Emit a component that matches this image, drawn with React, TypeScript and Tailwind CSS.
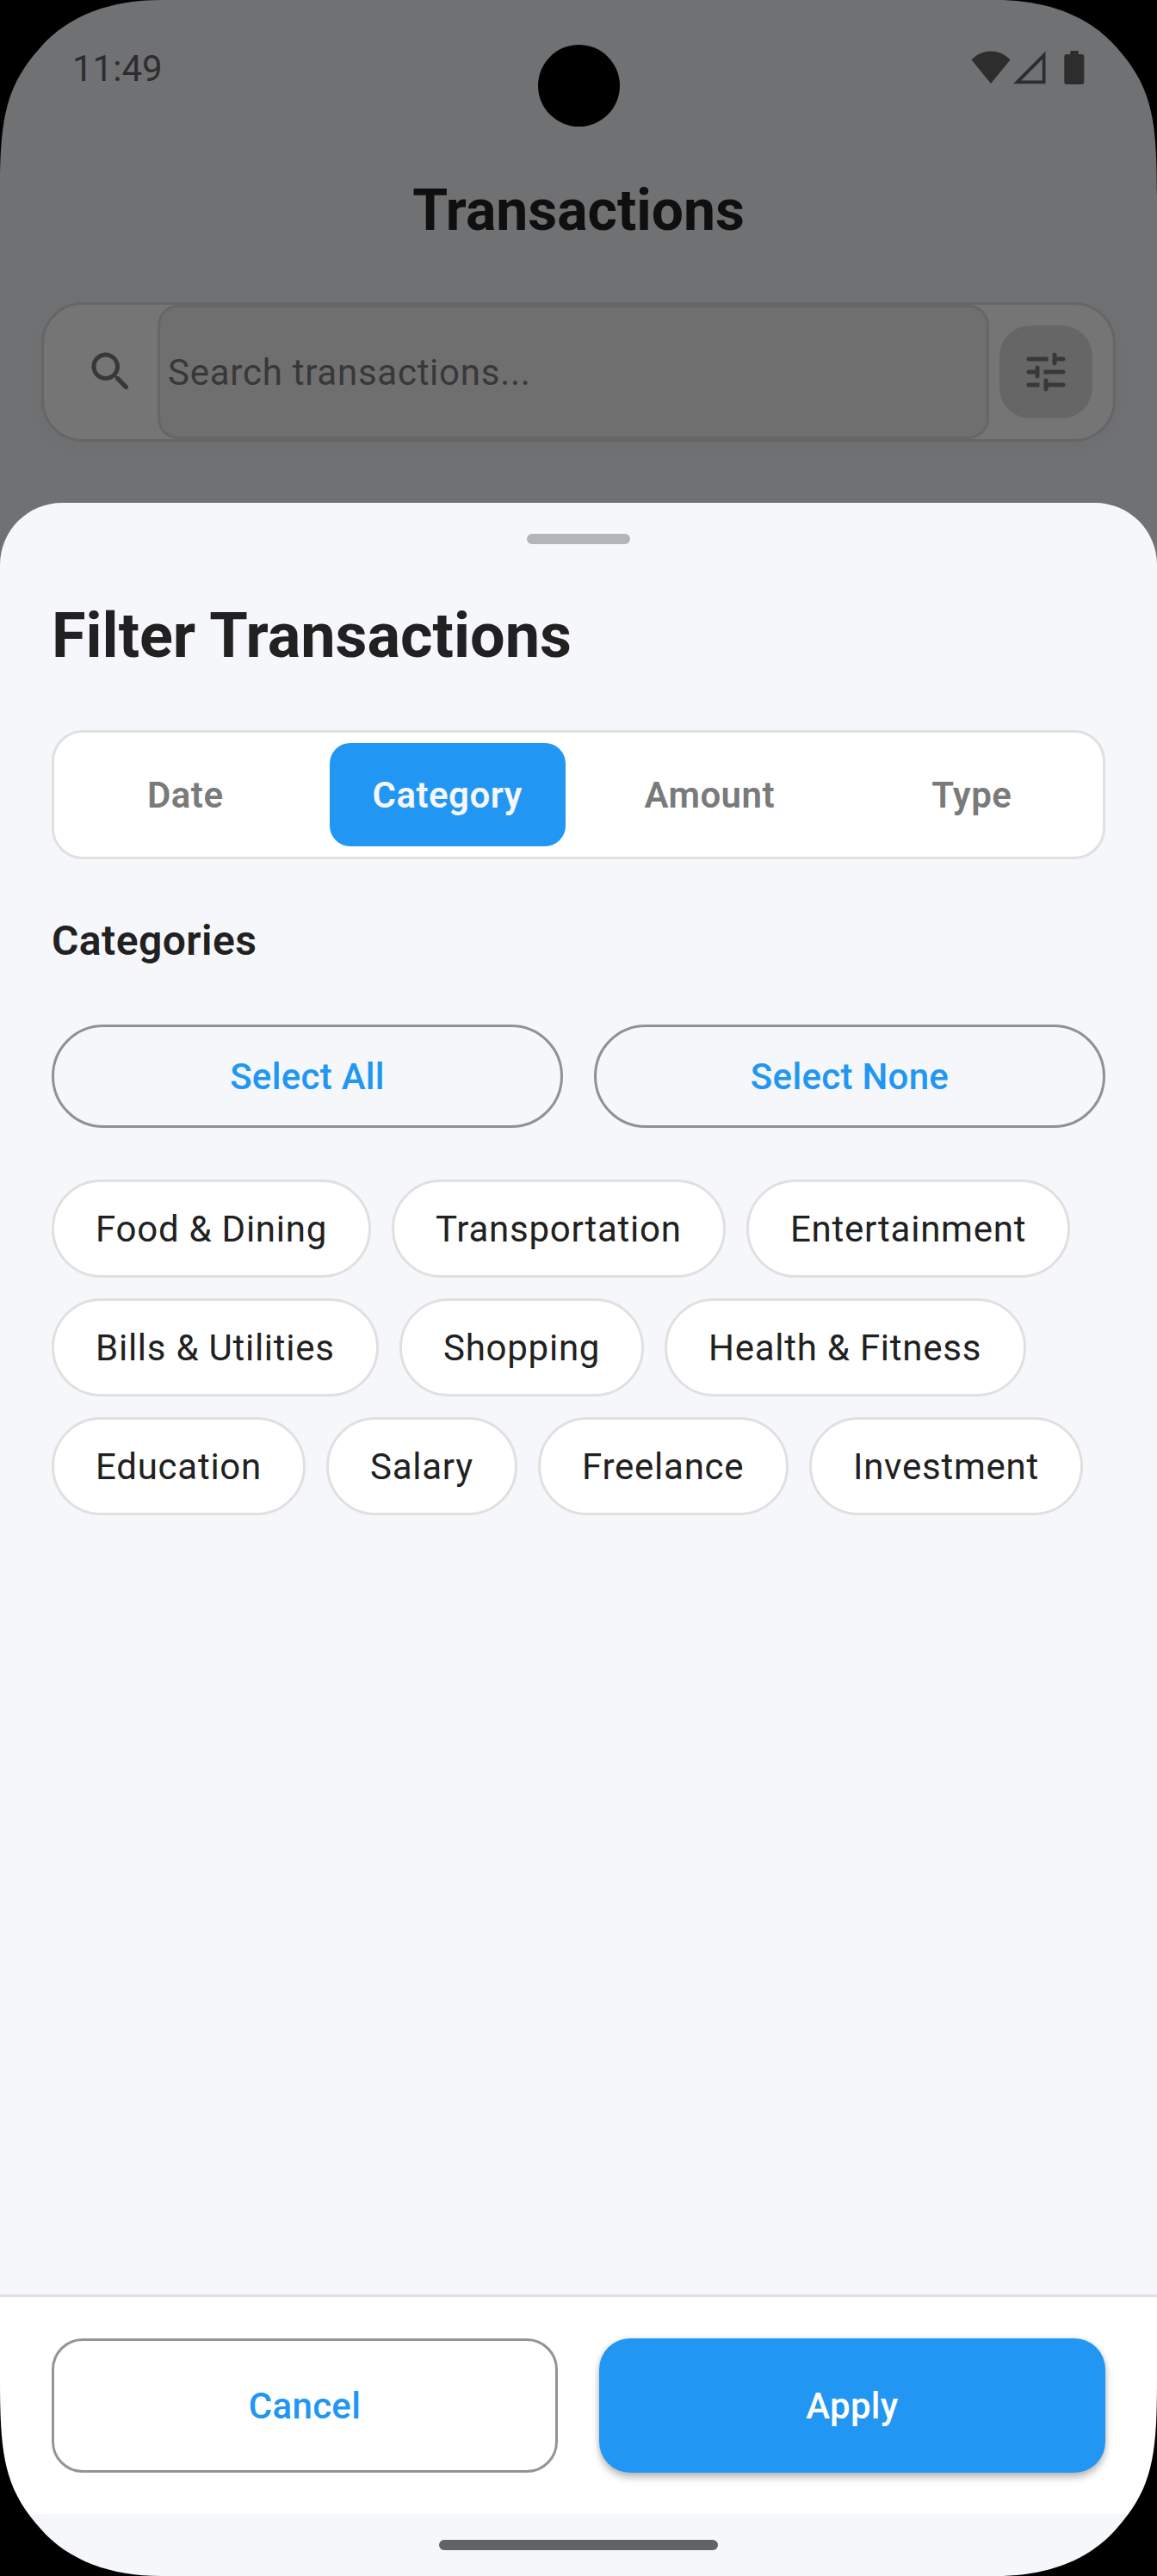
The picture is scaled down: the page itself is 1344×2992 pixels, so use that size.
const TABS = ["Date", "Category", "Amount", "Type"];

const CHIP_ROWS = [
  [
    { label: "Food & Dining", width: "w-[371px]" },
    { label: "Transportation", width: "w-[388px]" },
    { label: "Entertainment", width: "w-[376px]" },
  ],
  [
    { label: "Bills & Utilities", width: "w-[380px]" },
    { label: "Shopping", width: "w-[284px]" },
    { label: "Health & Fitness", width: "w-[420px]" },
  ],
  [
    { label: "Education", width: "w-[295px]" },
    { label: "Salary", width: "w-[222px]" },
    { label: "Freelance", width: "w-[291px]" },
    { label: "Investment", width: "w-[318px]" },
  ],
];

function Corner({ className }: { className: string }) {
  return (
    <svg className={"absolute " + className} width="190" height="230" viewBox="0 0 190 230" aria-hidden="true">
      <path d="M0 0V228C0 140 5 102 47 55C80 17 130 0 187 0Z" fill="#000" />
    </svg>
  );
}

function StatusBar() {
  return (
    <div className="flex h-[156px] items-start justify-between pl-[84px] pr-[84px] text-[#2d2d2d]">
      <span className="mt-[55px] text-[42px] leading-[50px]">11:49</span>
      <div className="mt-[59px] flex items-start">
        <svg width="46" height="39" viewBox="0 0 46 39" fill="currentColor">
          <path d="M0.5 10.5C6.5 3.8 14.3 0.4 23 0.4S39.500 3.800 45.500 10.500L23 38Z" />
        </svg>
        <svg className="ml-[3px]" width="38" height="39" viewBox="0 0 38 39" fill="currentColor">
          <path fillRule="evenodd" d="M37.500 0.500V38.300H0ZM33.800 9.800L9.200 34.600H33.800Z" />
        </svg>
        <svg className="ml-[21px]" width="24" height="39" viewBox="0 0 24 39" fill="currentColor">
          <path d="M7.300 0H16.700V4H20.500Q23.300 4 23.300 7V36Q23.300 39 20.500 39H3Q0.300 39 0.300 36V7Q0.300 4 3 4H7.300Z" />
        </svg>
      </div>
    </div>
  );
}

function SearchBar() {
  return (
    <div className="mx-12 mt-[18px] flex h-[162px] items-center rounded-[48px] border-[3px] border-[#666666] bg-[#757575] text-[#383838] shadow-[0_6px_24px_rgba(0,0,0,0.03)]">
      <svg className="ml-[48px] shrink-0" width="60" height="60" viewBox="0 0 24 24" fill="currentColor">
        <path d="M15.5 14h-.79l-.28-.27c1.2-1.4 1.82-3.31 1.48-5.34-.47-2.78-2.79-5-5.59-5.34-4.23-.52-7.79 3.04-7.27 7.27.34 2.8 2.56 5.12 5.34 5.59 2.03.34 3.94-.28 5.34-1.48l.27.28v.79l4.25 4.25c.41.41 1.08.41 1.49 0 .41-.41.41-1.08 0-1.49L15.5 14zm-6 0C7.01 14 5 11.99 5 9.5S7.01 5 9.5 5 14 7.01 14 9.5 11.99 14 9.5 14z" />
      </svg>
      <div className="ml-6 flex h-[156px] w-[966px] shrink-0 items-center rounded-[24px] border-[3px] border-[#666666] bg-[#6f6f6f] pl-[9px] pt-0.5">
        <span className="whitespace-nowrap text-[42px] leading-[50px] tracking-[0.75px]">Search transactions...</span>
      </div>
      <div className="ml-3 flex size-[108px] shrink-0 items-center justify-center rounded-[36px] bg-[#666666]">
        <svg width="60" height="60" viewBox="0 0 24 24" fill="currentColor">
          <path d="M3 18c0 .55.45 1 1 1h5v-2H4c-.55 0-1 .45-1 1zM3 6c0 .55.45 1 1 1h9V5H4c-.55 0-1 .45-1 1zm10 14v-1h7c.55 0 1-.45 1-1s-.45-1-1-1h-7v-1c0-.55-.45-1-1-1s-1 .45-1 1v4c0 .55.45 1 1 1s1-.45 1-1zM7 10v1H4c-.55 0-1 .45-1 1s.45 1 1 1h3v1c0 .55.45 1 1 1s1-.45 1-1v-4c0-.55-.45-1-1-1s-1 .45-1 1zm14 2c0-.55-.45-1-1-1h-9v2h9c.55 0 1-.45 1-1zm-5-3c.55 0 1-.45 1-1V7h3c.55 0 1-.45 1-1s-.45-1-1-1h-3V4c0-.55-.45-1-1-1s-1 .45-1 1v4c0 .55.45 1 1 1z" />
        </svg>
      </div>
    </div>
  );
}

function FilterSheet() {
  return (
    <section className="mt-[71px] flex flex-1 flex-col rounded-t-[72px] bg-[#f5f7fb] text-[#212121]">
      <div className="mx-auto mt-9 h-3 w-[120px] rounded-full bg-[#b4b5b7]" />

      <div className="flex flex-1 flex-col px-[60px]">
        <h2 className="mt-[65px] h-[84px] whitespace-nowrap text-[72px] font-bold leading-[84px]">Filter Transactions</h2>

        <div className="mt-[67px] grid h-[150px] grid-cols-4 rounded-[36px] border-[3px] border-[#dfe1e1] bg-white py-3 text-[42px] font-semibold leading-[50px] tracking-[0.45px]">
          {TABS.map((tab) => (
            <button
              key={tab}
              className={
                tab === "Category"
                  ? "mx-[15.5px] flex items-center justify-center rounded-[24px] bg-[#2196f3] pt-0.5 text-[#f5f7fb]"
                  : "mx-[15.5px] flex items-center justify-center rounded-[24px] pt-0.5 text-[#7a7a7a]"
              }
            >
              {tab}
            </button>
          ))}
        </div>

        <h3 className="mt-[65px] h-[60px] text-[48px] font-semibold leading-[60px] tracking-[0.45px]">Categories</h3>

        <div className="mt-[67px] grid h-[120px] grid-cols-2 gap-9 text-[42px] font-medium leading-[50px] tracking-[0.3px] text-[#2196f3]">
          <button className="rounded-full border-[3px] border-[#8f9194] pt-0.5">Select All</button>
          <button className="rounded-full border-[3px] border-[#8f9194] pt-0.5">Select None</button>
        </div>

        <div className="mt-[60px] flex flex-col gap-6">
          {CHIP_ROWS.map((row) => (
            <div key={row[0].label} className="flex gap-6">
              {row.map((chip) => (
                <button
                  key={chip.label}
                  className={
                    "flex h-[114px] items-center whitespace-nowrap rounded-full border-[3px] border-[#e0e0e0] bg-white pl-12 pt-0.5 text-[42px] leading-[50px] tracking-[0.75px] " +
                    chip.width
                  }
                >
                  {chip.label}
                </button>
              ))}
            </div>
          ))}
        </div>
      </div>

      <div className="grid h-[255px] grid-cols-2 items-start gap-12 border-t-[3px] border-[#dfe1e1] bg-white px-[60px] pt-12 text-[42px] font-medium leading-[50px] tracking-[0.3px]">
        <button className="h-[156px] rounded-[36px] border-[3px] border-[#949494] pt-0.5 text-[#2196f3]">Cancel</button>
        <button className="h-[156px] rounded-[36px] bg-[#2196f3] pt-0.5 text-white shadow-[0_6px_9px_rgba(0,0,0,0.24),0_0_6px_rgba(0,0,0,0.12)]">Apply</button>
      </div>

      <div className="flex h-[72px] justify-center pt-[30px]">
        <div className="h-3 w-[324px] rounded-full bg-[#616366]" />
      </div>
    </section>
  );
}

export default function App() {
  return (
    <main className="relative flex h-[2992px] w-[1344px] flex-col overflow-hidden bg-[#707173] font-['Roboto',sans-serif]">
      <StatusBar />
      <h1 className="flex h-[177px] items-center justify-center text-[66px] font-bold leading-[78px] text-[#0f0f0f]">Transactions</h1>
      <SearchBar />
      <FilterSheet />

      <div className="absolute left-[624.5px] top-[52px] size-[95px] rounded-full bg-black" />
      <Corner className="left-0 top-0" />
      <Corner className="right-0 top-0 -scale-x-100" />
      <Corner className="bottom-0 left-0 -scale-y-100" />
      <Corner className="bottom-0 right-0 -scale-100" />
    </main>
  );
}
